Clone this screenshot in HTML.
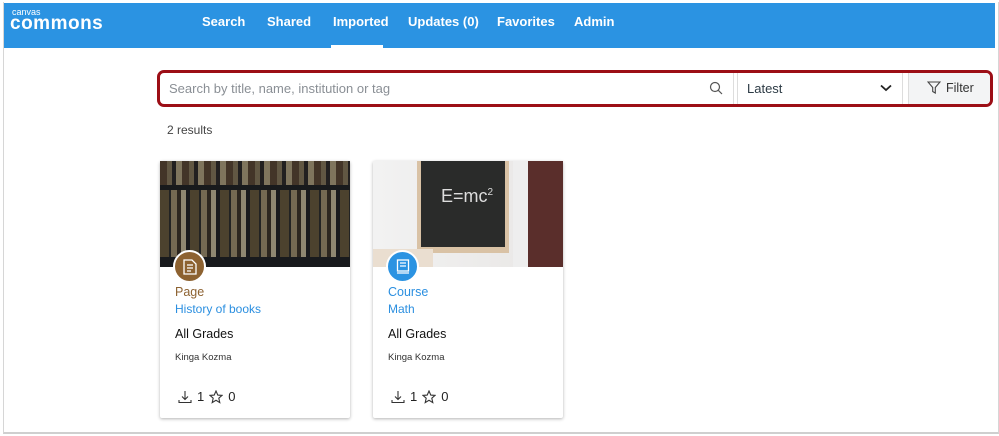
<!DOCTYPE html>
<html><head><meta charset="utf-8"><style>
*{box-sizing:border-box;margin:0;padding:0}
body{width:999px;height:436px;background:#fff;font-family:"Liberation Sans",Arial,sans-serif;position:relative;overflow:hidden}
.frame{position:absolute;left:3px;top:2px;width:996px;height:432px;border:1px solid #d6d6d6;border-top:none;border-bottom:2px solid #cfcfcf}
.hdr{position:absolute;left:4px;top:3px;width:991px;height:45px;background:#2b93e2}
.logo1{position:absolute;left:8px;top:5px;color:#fff;font-size:9px;line-height:9px}
.logo2{position:absolute;left:6px;top:11px;color:#fff;font-size:19px;font-weight:bold;line-height:19px;letter-spacing:0.5px}
.nav{position:absolute;top:11px;color:#fff;font-size:13px;font-weight:bold}
.ul{position:absolute;left:331px;top:45px;width:52px;height:3px;background:#fff}
.bar{position:absolute;left:157px;top:70px;width:836px;height:37px;border:3px solid #9c0e16;border-radius:7px;background:#fff;overflow:hidden}
.ph{position:absolute;left:9px;top:8px;font-size:13px;color:#8a8f95}
.sep{position:absolute;top:0;width:1px;height:31px;background:#ddd}
.sel{position:absolute;left:587px;top:8px;font-size:13px;color:#2d3b45}
.filt{position:absolute;left:748px;top:0;width:82px;height:31px;background:#f3f4f5;border-left:1px solid #ddd}
.res{position:absolute;left:167px;top:123px;font-size:12px;color:#444}
.card{position:absolute;top:161px;width:190px;height:257px;background:#fff;box-shadow:0 1px 3px rgba(0,0,0,.3);border-radius:2px;overflow:visible}
.img{position:absolute;left:0;top:0;width:190px;height:106px;overflow:hidden}
.ic{position:absolute;left:13px;top:89px;width:33px;height:33px;border-radius:50%;border:2px solid #fff}
.t1{position:absolute;left:15px;top:124px;font-size:12.5px}
.t2{position:absolute;left:15px;top:141px;font-size:12px;color:#2b8fe0}
.g{position:absolute;left:15px;top:166px;font-size:12.5px;color:#111}
.a{position:absolute;left:15px;top:191px;font-size:9.5px;color:#333}
.st{position:absolute;left:18px;top:228px;font-size:13px;color:#222;display:flex;align-items:center;gap:5px}
</style></head><body>
<div class="frame"></div>
<div class="hdr">
<div class="logo1">canvas</div><div class="logo2">commons</div>
<div class="nav" style="left:198px">Search</div>
<div class="nav" style="left:263px">Shared</div>
<div class="nav" style="left:329px">Imported</div>
<div class="nav" style="left:404px">Updates (0)</div>
<div class="nav" style="left:493px">Favorites</div>
<div class="nav" style="left:570px">Admin</div>
</div>
<div class="ul"></div>
<div class="bar">
<div class="ph">Search by title, name, institution or tag</div>
<svg style="position:absolute;left:549px;top:8px" width="14" height="14" viewBox="0 0 14 14"><circle cx="6" cy="6" r="4.5" fill="none" stroke="#555" stroke-width="1.2"/><path d="M9.3 9.3L13 13" stroke="#555" stroke-width="1.2"/></svg>
<div class="sep" style="left:573px"></div>
<div class="sep" style="left:577px"></div>
<div class="sel">Latest</div>
<svg style="position:absolute;left:720px;top:11px" width="12" height="8" viewBox="0 0 12 8"><path d="M1 1.5L6 6L11 1.5" fill="none" stroke="#222" stroke-width="1.8"/></svg>
<div class="sep" style="left:742px"></div>
<div class="filt">
<svg style="position:absolute;left:18px;top:8px" width="14" height="13" viewBox="0 0 14 13"><path d="M1 1H13L8.3 6.5V12L5.7 10.5V6.5Z" fill="none" stroke="#444" stroke-width="1.1"/></svg>
<span style="position:absolute;left:37px;top:8px;font-size:12.5px;color:#333">Filter</span></div>
</div>
<div class="res">2 results</div>

<div class="card" style="left:160px">
<div class="img" style="background:
repeating-linear-gradient(90deg,#6b5a3a 0 9px,#2a2a28 9px 11px,#a89670 11px 17px,#3a2e22 17px 21px,#d2c4a0 21px 26px,#1c1d1f 26px 30px);">
<div style="position:absolute;left:0;top:0;width:190px;height:28px;background:repeating-linear-gradient(90deg,#5c4630 0 7px,#8a7a5a 7px 12px,#2a2624 12px 16px,#b8a882 16px 22px)"></div>
<div style="position:absolute;left:0;top:24px;width:190px;height:5px;background:#1b1c1e"></div>
<div style="position:absolute;left:0;top:96px;width:190px;height:10px;background:#1b1c1f"></div>
<div style="position:absolute;left:0;top:0;width:190px;height:106px;background:rgba(20,22,25,.35)"></div>
</div>
<div class="ic" style="background:#8d6231"><svg style="position:absolute;left:8px;top:7px" width="14" height="16" viewBox="0 0 14 16"><path d="M1 1H9L13 5V15H1Z" fill="none" stroke="#fff" stroke-width="1.3"/><path d="M4 6H10M4 9H10M4 12H8" stroke="#fff" stroke-width="1.2"/></svg></div>
<div class="t1" style="color:#8d6231">Page</div>
<div class="t2">History of books</div>
<div class="g">All Grades</div>
<div class="a">Kinga Kozma</div>
<div class="st"><svg width="14" height="14" viewBox="0 0 14 14"><path d="M7 1V9M4 6.5L7 9.5L10 6.5M1 10V12.5H13V10" fill="none" stroke="#333" stroke-width="1.1"/></svg>1 <svg width="14" height="14" viewBox="0 0 14 14"><path d="M7 1L8.8 5.1L13 5.4L9.8 8.2L10.8 12.6L7 10.3L3.2 12.6L4.2 8.2L1 5.4L5.2 5.1Z" fill="none" stroke="#333" stroke-width="1.1"/></svg>0</div>
</div>

<div class="card" style="left:373px">
<div class="img" style="background:linear-gradient(90deg,#f2f2f2,#e8e6e4)">
<div style="position:absolute;left:44px;top:0;width:92px;height:92px;background:#d9c2a5"></div>
<div style="position:absolute;left:48px;top:0;width:84px;height:86px;background:#2a2b2a;color:#ddd;font-family:'Liberation Sans';font-size:18px;padding:25px 0 0 20px">E=mc<sup style="font-size:10px">2</sup></div>
<div style="position:absolute;left:140px;top:0;width:50px;height:106px;background:linear-gradient(90deg,#eee 0 30%,#5a2e2b 30% 100%)"></div>
<div style="position:absolute;left:0;top:88px;width:60px;height:18px;background:#eaded0"></div>
</div>
<div class="ic" style="background:#2b93e2"><svg style="position:absolute;left:8px;top:7px" width="14" height="16" viewBox="0 0 14 16"><rect x="1.5" y="1" width="11" height="11" fill="none" stroke="#fff" stroke-width="1.3"/><path d="M4 4H10M4 7H10M1 14H13" stroke="#fff" stroke-width="1.3"/></svg></div>
<div class="t1" style="color:#2b8fe0">Course</div>
<div class="t2">Math</div>
<div class="g">All Grades</div>
<div class="a">Kinga Kozma</div>
<div class="st"><svg width="14" height="14" viewBox="0 0 14 14"><path d="M7 1V9M4 6.5L7 9.5L10 6.5M1 10V12.5H13V10" fill="none" stroke="#333" stroke-width="1.1"/></svg>1 <svg width="14" height="14" viewBox="0 0 14 14"><path d="M7 1L8.8 5.1L13 5.4L9.8 8.2L10.8 12.6L7 10.3L3.2 12.6L4.2 8.2L1 5.4L5.2 5.1Z" fill="none" stroke="#333" stroke-width="1.1"/></svg>0</div>
</div>
</body></html>
